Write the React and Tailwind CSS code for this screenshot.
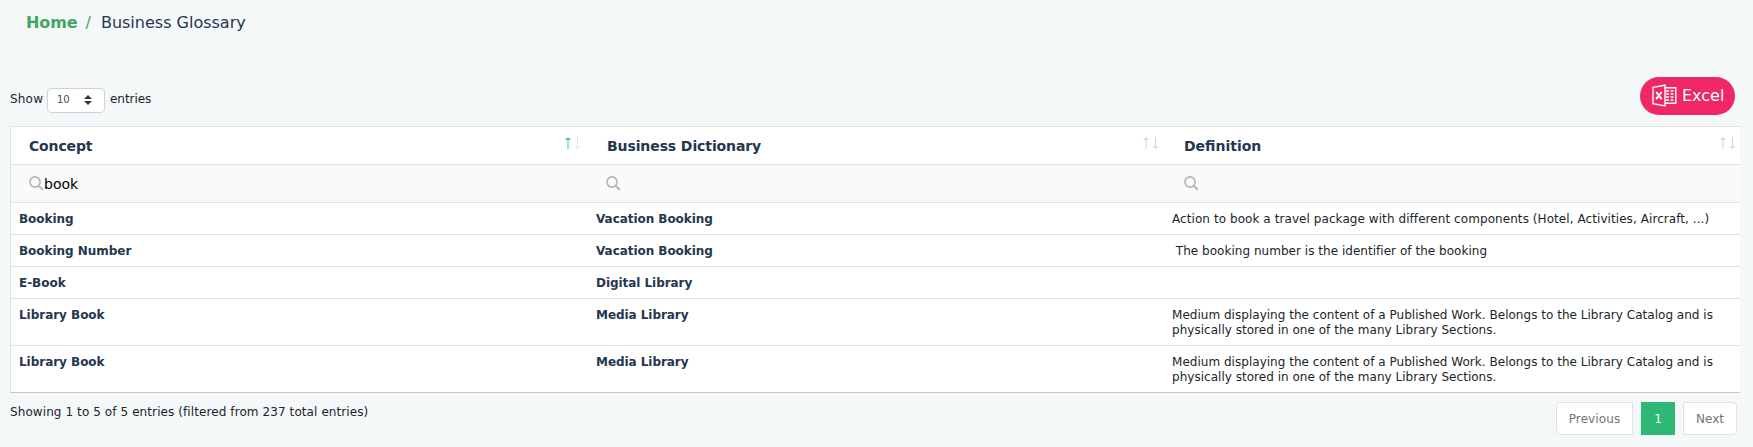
import React from "react";

const medium = {
  concept: "Library Book",
  dict: "Media Library",
  tracking: "tracking-[0.025px]",
  lines: [
    "Medium displaying the content of a Published Work. Belongs to the Library Catalog and is",
    "physically stored in one of the many Library Sections.",
  ],
};

const rows = [
  {
    concept: "Booking",
    dict: "Vacation Booking",
    tracking: "tracking-[0.07px]",
    lines: ["Action to book a travel package with different components (Hotel, Activities, Aircraft, ...)"],
  },
  {
    concept: "Booking Number",
    dict: "Vacation Booking",
    tracking: "tracking-[0.03px]",
    lines: ["\u00a0The booking number is the identifier of the booking"],
  },
  { concept: "E-Book", dict: "Digital Library", tracking: "", lines: [""] },
  medium,
  medium,
];

const columns = [
  { title: "Concept", filter: "book", sorted: true, tracking: "tracking-[-0.15px]" },
  { title: "Business Dictionary", filter: "", sorted: false, tracking: "tracking-[-0.1px]" },
  { title: "Definition", filter: "", sorted: false, tracking: "" },
];

function SearchIcon() {
  return (
    <svg width="15" height="15" viewBox="0 0 15 15" fill="none" stroke="#b5b5b5" className="shrink-0">
      <circle cx="6" cy="6" r="5.1" strokeWidth="1.6" />
      <path d="M9.6 9.6L13.8 13.8" strokeWidth="2" />
    </svg>
  );
}

function SortIcon({ active }) {
  return (
    <svg width="16" height="13" viewBox="0 0 16 13" fill="none">
      <path d="M3 12V1" stroke={active ? "#86d3ef" : "#e0e2e6"} strokeWidth="1.6" />
      <path d="M0.6 3.2L3 1L5.4 3.2" stroke={active ? "#2fb775" : "#cfd2d8"} strokeWidth="1.1" />
      <path d="M12.5 0V11.5M10 9.2L12.5 11.5L15 9.2" stroke={active ? "#d3efe0" : "#cfd2d8"} />
    </svg>
  );
}

function ExcelIcon() {
  return (
    <svg width="25" height="24" viewBox="0 0 25 24" fill="none" stroke="#fff" strokeWidth="1.4" className="shrink-0">
      <path d="M1 3.4L13 1.2V22L1 19.6Z" />
      <path d="M13 3.7H23.8V19.3H13" />
      <path d="M4.2 8L9.6 15.2M9.6 8L4.2 15.2" strokeWidth="2" />
      <path d="M14 7H17M18.5 7H21.5M14 10H17M18.5 10H21.5M14 13H17M18.5 13H21.5M14 16H17M18.5 16H21.5" strokeWidth="1.5" />
    </svg>
  );
}

export default function App() {
  return (
    <div className="h-[447px] w-[1753px] overflow-hidden bg-[#f4f8f9] font-['Verdana','DejaVu_Sans',sans-serif] text-xs text-[#212529]">
      <nav className="flex h-[76px] items-start pt-[13px] pl-[26px] text-base leading-5">
        <a className="font-bold tracking-[-0.1px] text-[#40a860]">Home</a>
        <span className="ml-2 text-[#40a860]">/</span>
        <span className="ml-2.5 text-[#243650]">Business Glossary</span>
      </nav>
      <div className="flex h-[50px] justify-between pr-[18px] pl-[10px]">
        <div className="flex h-[26px] items-center self-start pt-5">
          <span className="w-[37px] tracking-[0.2px]">Show</span>
          <span className="mt-0.5 flex h-[25px] w-[58px] shrink-0 items-center justify-between rounded border border-[#ced4da] bg-white pr-3 pl-[9px] text-[10px] text-[#495057]">
            10
            <svg width="8" height="10" viewBox="0 0 8 10" fill="#343a40"><path d="M0 4L4 0L8 4ZM0 6L4 10L8 6Z" /></svg>
          </span>
          <span className="ml-[5px] tracking-[-0.05px]">entries</span>
        </div>
        <button className="mt-px flex h-[38px] w-[95px] items-center rounded-full bg-[#ef2765] pl-3 text-base text-white">
          <ExcelIcon />
          <span className="ml-[5px]">Excel</span>
        </button>
      </div>
      <div className="ml-[10px] w-[1730px] border-t border-b border-l border-[#dee2e6] border-b-[#c4c6c9] bg-white">
        <div className="grid h-[38px] grid-cols-[578px_577px_1fr] border-b border-[#dee2e6]">
          {columns.map((c) => (
            <div key={c.title} className="flex justify-between pr-1 pl-[18px] first:pr-2 nth-2:pr-[7px]">
              <span className={`text-sm leading-[39px] font-bold text-[#243650] ${c.tracking}`}>{c.title}</span>
              <span className="pt-[10px]"><SortIcon active={c.sorted} /></span>
            </div>
          ))}
        </div>
        <div className="grid h-[38px] grid-cols-[577px_578px_1fr] border-b border-[#dee2e6] bg-[#fafafa]">
          {columns.map((c) => (
            <div key={c.title} className="flex items-center pl-[18px] text-sm text-black">
              <SearchIcon />
              <span>{c.filter}</span>
            </div>
          ))}
        </div>
        {rows.map((r, i) => (
          <div key={i} className="grid grid-cols-[577px_576px_1fr] border-b border-[#dee2e6] px-2 pt-[9px] pb-[7px] leading-[15px] last:border-b-0">
            <span className="font-bold tracking-[-0.03px] text-[#243650]">{r.concept}</span>
            <span className="font-bold tracking-[-0.05px] text-[#243650]">{r.dict}</span>
            <span className={`min-h-[15px] whitespace-nowrap ${r.tracking}`}>
              {r.lines.map((l, j) => (
                <span key={j} className="block">{l}</span>
              ))}
            </span>
          </div>
        ))}
      </div>
      <div className="flex justify-between pr-4 pl-[10px]">
        <span className="pt-3 leading-[15px] tracking-[0.09px]">Showing 1 to 5 of 5 entries (filtered from 237 total entries)</span>
        <div className="flex gap-2 pt-[9px] text-[#6c757d]">
          <span className="flex h-[33px] w-[77px] items-center justify-center rounded-l border border-[#dee2e6] bg-white tracking-[0.1px]">Previous</span>
          <span className="flex h-[33px] w-[34px] items-center justify-center bg-[#2fb775] text-white">1</span>
          <span className="flex h-[33px] w-[54px] items-center justify-center rounded-r border border-[#dee2e6] bg-white">Next</span>
        </div>
      </div>
    </div>
  );
}
